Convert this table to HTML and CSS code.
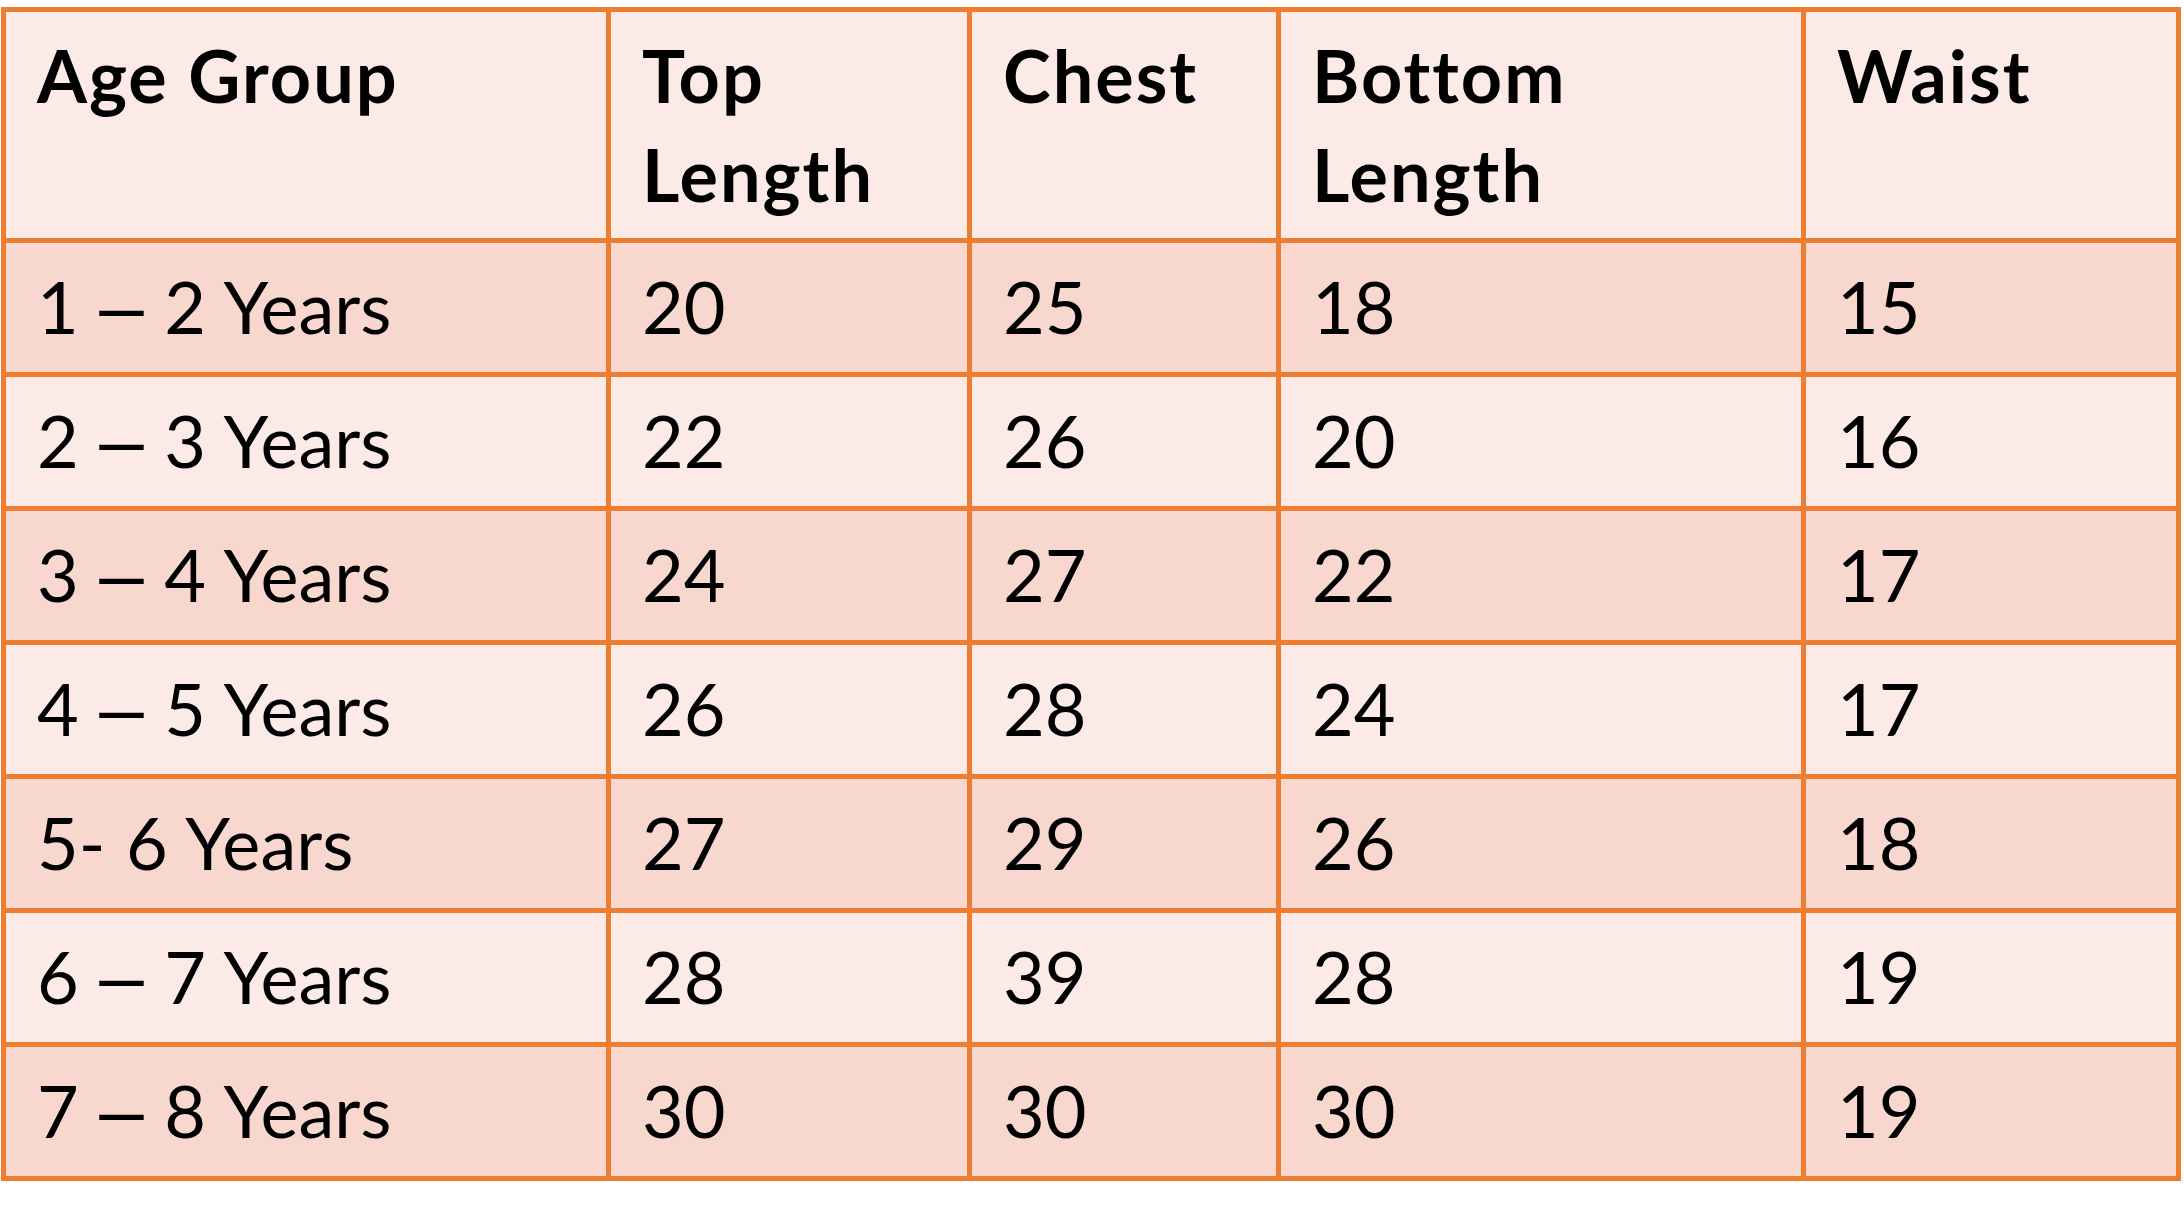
FILE: index.html
```html
<!DOCTYPE html>
<html lang="en">
<head>
<meta charset="utf-8">
<title>Size Chart</title>
<link rel="stylesheet" href="styles.css">
</head>
<body>
<table class="size-table">
  <colgroup>
    <col class="c1"><col class="c2"><col class="c3"><col class="c4"><col class="c5">
  </colgroup>
  <thead>
    <tr class="head">
      <th>Age Group</th>
      <th>Top<br>Length</th>
      <th>Chest</th>
      <th>Bottom<br>Length</th>
      <th>Waist</th>
    </tr>
  </thead>
  <tbody>
    <tr class="band"><td class="age">1 <span class="dash">–</span> 2 Years</td><td>20</td><td>25</td><td>18</td><td>15</td></tr>
    <tr class="plain"><td class="age">2 <span class="dash">–</span> 3 Years</td><td>22</td><td>26</td><td>20</td><td>16</td></tr>
    <tr class="band"><td class="age">3 <span class="dash">–</span> 4 Years</td><td>24</td><td>27</td><td>22</td><td>17</td></tr>
    <tr class="plain"><td class="age">4 <span class="dash">–</span> 5 Years</td><td>26</td><td>28</td><td>24</td><td>17</td></tr>
    <tr class="band"><td class="age">5- 6 Years</td><td>27</td><td>29</td><td>26</td><td>18</td></tr>
    <tr class="plain"><td class="age">6 <span class="dash">–</span> 7 Years</td><td>28</td><td>39</td><td>28</td><td>19</td></tr>
    <tr class="band"><td class="age">7 <span class="dash">–</span> 8 Years</td><td>30</td><td>30</td><td>30</td><td>19</td></tr>
  </tbody>
</table>
</body>
</html>
```
FILE: styles.css
```css
html, body {
  margin: 0;
  padding: 0;
  background: #ffffff;
}

body {
  padding: 7px 0 0 1px;
  font-family: "Lato", "Liberation Sans", sans-serif;
  color: #000000;
}

.size-table {
  border-collapse: separate;
  border-spacing: 0;
  table-layout: fixed;
  width: 2180px;
  border-top: 5px solid #ED7D31;
  border-left: 5px solid #ED7D31;
}

.c1 { width: 605px; }
.c2 { width: 361px; }
.c3 { width: 309px; }
.c4 { width: 525px; }
.c5 { width: 375px; }

.size-table th,
.size-table td {
  border-right: 5px solid #ED7D31;
  border-bottom: 5px solid #ED7D31;
  padding: 14px 10px 16px 31px;
  font-size: 72px;
  line-height: 99px;
  height: 99px;
  text-align: left;
  vertical-align: top;
  white-space: nowrap;
}

.size-table th {
  font-weight: 700;
  letter-spacing: 2px;
  padding-bottom: 14px;
  height: 198px;
}

.size-table td {
  font-weight: 400;
}

.size-table td.age {
  word-spacing: 2px;
}

.dash {
  font-family: "Liberation Sans", sans-serif;
  font-size: 80px;
  line-height: 0;
}

.head { background: #FBEAE6; }
.plain { background: #FBEAE6; }
.band { background: #F8D8CE; }
```
